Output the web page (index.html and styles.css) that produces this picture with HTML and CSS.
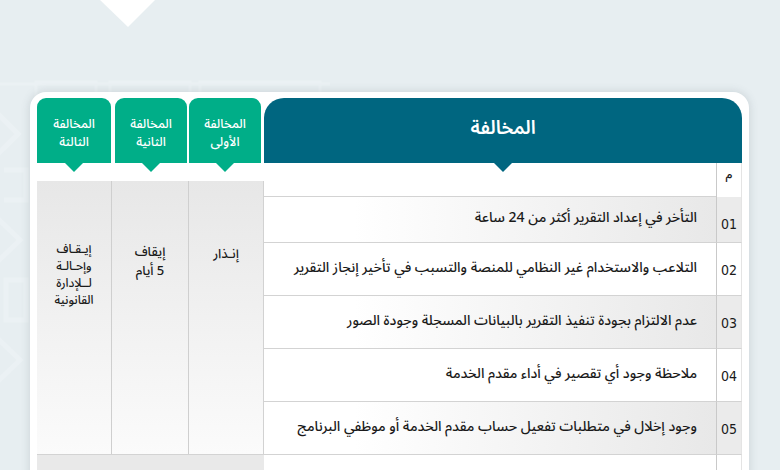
FILE: index.html
```html
<!DOCTYPE html>
<html lang="ar">
<head>
    <meta charset="UTF-8">
    <meta name="viewport" content="width=device-width, initial-scale=1.0">
    <title>جدول المخالفات</title>
    <link rel="stylesheet" href="styles.css">
</head>
<body>
    <div class="page">
        <!-- decorative background pattern -->
        <svg class="pattern" width="340" height="400" viewBox="0 0 340 400" fill="none" stroke="#ebf1f4" stroke-width="5">
            <path d="M0 84 H330" stroke-width="3"/>
            <rect x="36" y="82" width="60" height="14" stroke-width="3"/>
            <rect x="110" y="82" width="80" height="14" stroke-width="3"/>
            <rect x="200" y="82" width="120" height="14" stroke-width="3"/>
            <path d="M-6 110 L18 134 L-6 158"/>
            <path d="M4 170 H26 V200 H4"/>
            <path d="M-6 215 L20 240 L-6 265"/>
            <path d="M6 280 H26 V320 H6 Z"/>
            <path d="M-6 335 L20 360 L-6 385"/>
        </svg>

        <div class="prev-arrow"></div>

        <div class="card" dir="rtl">
            <div class="head">
                <div class="head-main">المخالفة</div>
                <div class="tab tab-1">المخالفة<br>الأولى</div>
                <div class="tab tab-2">المخالفة<br>الثانية</div>
                <div class="tab tab-3">المخالفة<br>الثالثة</div>
            </div>

            <div class="table">
                <div class="num num-head">م</div>
                <div class="desc"></div>

                <div class="pen pen-1"><span>إنـذار</span></div>
                <div class="pen pen-2"><span>إيقاف<br>5 أيام</span></div>
                <div class="pen pen-3"><span>إيـقـاف<br>وإحـالـة<br>لــلإدارة<br>القانونية</span></div>

                <div class="num shade">01</div>
                <div class="desc shade">التأخر في إعداد التقرير أكثر من 24 ساعة</div>

                <div class="num">02</div>
                <div class="desc">التلاعب والاستخدام غير النظامي للمنصة والتسبب في تأخير إنجاز التقرير</div>

                <div class="num shade">03</div>
                <div class="desc shade">عدم الالتزام بجودة تنفيذ التقرير بالبيانات المسجلة وجودة الصور</div>

                <div class="num">04</div>
                <div class="desc">ملاحظة وجود أي تقصير في أداء مقدم الخدمة</div>

                <div class="num shade">05</div>
                <div class="desc shade">وجود إخلال في متطلبات تفعيل حساب مقدم الخدمة أو موظفي البرنامج</div>

                <div class="num next"></div>
                <div class="desc next"></div>
                <div class="pen-next"></div>
            </div>
        </div>
    </div>
</body>
</html>
```

FILE: styles.css
```css
html, body {
    margin: 0;
    height: 470px;
    overflow: hidden;
}
body {
    background: #e7eef1;
    font-family: "Noto Sans Arabic", "Noto Kufi Arabic", "DejaVu Sans", sans-serif;
    color: #1a1a1a;
}
.page {
    position: relative;
    height: 470px;
}
.pattern {
    position: absolute;
    left: 0;
    top: 0;
}
.prev-arrow {
    position: relative;
    width: 0;
    height: 0;
    margin-left: 100px;
    border-left: 28px solid transparent;
    border-right: 27px solid transparent;
    border-top: 27px solid #ffffff;
}
.card {
    position: relative;
    width: 705px;
    margin: 65px 0 0 30px;
    padding: 6px 7px 0;
    height: 420px;
    background: #ffffff;
    border-radius: 16px 16px 0 0;
    box-shadow: 0 0 10px rgba(60, 80, 90, 0.18);
}

/* header */
.head {
    display: flex;
    height: 65px;
}
.head-main, .tab {
    position: relative;
    display: flex;
    align-items: center;
    justify-content: center;
    text-align: center;
    color: #ffffff;
    box-sizing: border-box;
}
.head-main {
    width: 478px;
    background: #006680;
    border-radius: 20px 20px 0 0;
    font-size: 19px;
    font-weight: 600;
    padding-bottom: 6px;
}
.tab {
    width: 72px;
    background: #00ae88;
    border-radius: 9px 9px 0 0;
    font-size: 12.5px;
    font-weight: 500;
    line-height: 18px;
    padding-top: 4px;
}
.tab-1 { margin-right: 3px; }
.tab-2 { margin-right: 2px; }
.tab-3 { margin-right: 4px; width: 74px; }
.head-main::after, .tab::after {
    content: "";
    position: absolute;
    left: 50%;
    bottom: -9px;
    margin-left: -9px;
    border-left: 9px solid transparent;
    border-right: 9px solid transparent;
}
.head-main::after { border-top: 9px solid #006680; }
.tab::after { border-top: 9px solid #00ae88; }

/* table body */
.table {
    display: grid;
    grid-template-columns: 26px 452px 76px 77px 74px;
    grid-template-rows: 34px 46px 53px 53px 53px 53px 40px;
}
.num {
    grid-column: 1;
    border-left: 1px solid #c9c9c9;
    border-right: 1px solid #e4e4e4;
    border-bottom: 1px solid #d3d3d3;
    font-family: "DejaVu Sans Condensed", "DejaVu Sans", sans-serif;
    font-size: 14px;
    text-align: center;
    padding-top: 19px;
    box-sizing: border-box;
}
.num-head {
    padding-top: 3px;
    border-bottom: none;
}
.desc {
    grid-column: 2;
    display: flex;
    align-items: center;
    padding: 0 19px 4px 0;
    border-bottom: 1px solid #d3d3d3;
    font-size: 14px;
    font-weight: 500;
    box-sizing: border-box;
}
.desc:first-of-type { border-bottom: none; }
.num.shade { background: #ebebeb; }
.desc.shade { background: linear-gradient(to left, #e8e8e8, #ffffff 80%); }
.num.next, .desc.next { border-bottom: none; }

.pen {
    grid-row: 1 / 7;
    margin-top: 18px;
    background: linear-gradient(#e7e7e7, #fbfbfb);
    border-bottom: 1px solid #d3d3d3;
    text-align: center;
    font-size: 13px;
    font-weight: 500;
    padding-top: 64px;
    box-sizing: border-box;
}
.pen-1 {
    grid-column: 3;
    border-right: 1px solid #d2d2d2;
    border-left: 1px solid #cfcfcf;
    line-height: 18px;
}
.pen-2 {
    grid-column: 4;
    border-left: 1px solid #cfcfcf;
    line-height: 19px;
    padding-top: 62px;
}
.pen-3 {
    grid-column: 5;
    font-size: 12px;
    line-height: 17px;
    padding-top: 60px;
}
.pen-next {
    grid-column: 3 / 6;
    grid-row: 7;
    background: #e9e9e9;
    border-top: 1px solid #d3d3d3;
    margin-top: -1px;
}
```
